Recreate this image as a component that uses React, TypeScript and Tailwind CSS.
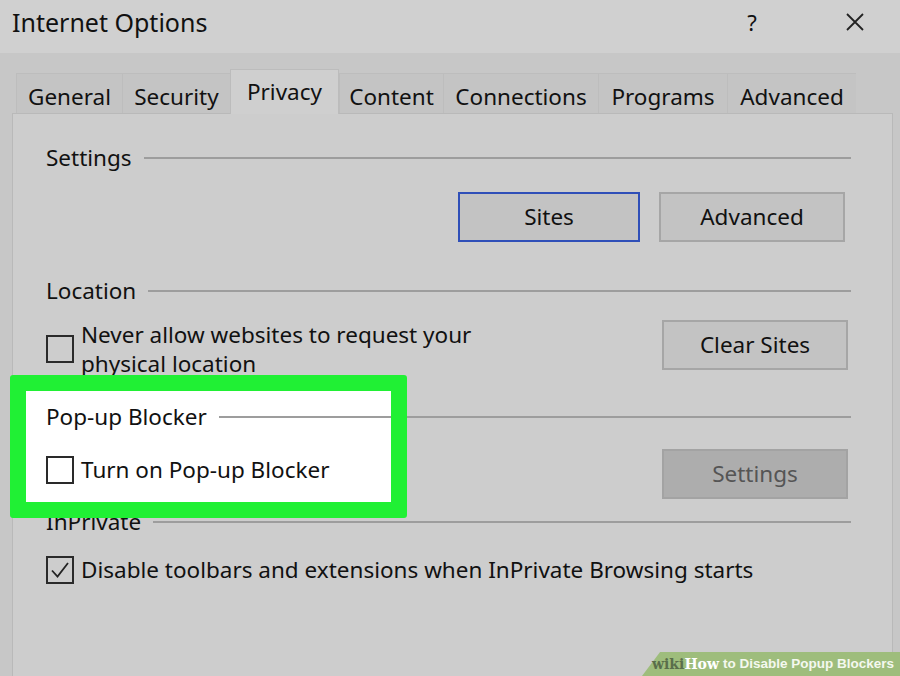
import React from 'react'

const tabs = [
    { name: 'General', w: 106 },
    { name: 'Security', w: 108 },
    { name: 'Privacy', w: 109, active: true },
    { name: 'Content', w: 104 },
    { name: 'Connections', w: 155 },
    { name: 'Programs', w: 129 },
    { name: 'Advanced', w: 129 },
]

const GroupHeader = ({ label }: { label: string }) => (
    <div className="flex items-center gap-[12px] h-[30px]">
        <span className="text-[22.5px] leading-none">{label}</span>
        <div className="flex-1 h-[2px] bg-[#9d9d9d]"></div>
    </div>
)

const CheckBox = ({ checked }: { checked?: boolean }) => (
    <div className="w-[28px] h-[28px] border-2 border-[#2a2a2a] shrink-0 flex items-center justify-center">
        {checked && (
            <svg width="22" height="22" viewBox="0 0 22 22">
                <path d="M3 11.5 L8.5 17.5 L19 4" fill="none" stroke="#222" strokeWidth="1.8" />
            </svg>
        )}
    </div>
)

const WinButton = ({
    label,
    w,
    focused,
    disabled,
}: {
    label: string
    w: number
    focused?: boolean
    disabled?: boolean
}) => (
    <div
        className={`h-[50px] flex items-center justify-center text-[22.5px] border-2 ${
            focused
                ? 'border-[#2f4fb8] bg-[#c3c3c3] text-[#111]'
                : disabled
                  ? 'border-[#a3a3a3] bg-[#adadad] text-[#555]'
                  : 'border-[#a6a6a6] bg-[#c3c3c3] text-[#111]'
        }`}
        style={{ width: w }}
    >
        {label}
    </div>
)

export default function App() {
    return (
        <div
            className="w-[900px] h-[676px] bg-[#c7c7c7] relative overflow-hidden flex flex-col text-[#111]"
            style={{ fontFamily: '"Noto Sans", "DejaVu Sans", sans-serif' }}
        >
            {/* Title bar */}
            <div className="h-[53px] bg-[#d0d0d0] flex items-start pt-[6px] pl-[12px] shrink-0">
                <div className="text-[25px] leading-[32px] flex-1">Internet Options</div>
                <div className="text-[22px] leading-[32px] w-[40px] text-center mr-[63px]">?</div>
                <div className="w-[40px] h-[32px] mr-[25px] flex items-center justify-center">
                    <svg width="20" height="20" viewBox="0 0 20 20">
                        <path d="M2 2 L18 18 M18 2 L2 18" stroke="#222" strokeWidth="1.8" />
                    </svg>
                </div>
            </div>

            {/* Tabs */}
            <div className="h-[60px] pl-[16px] flex items-end shrink-0">
                {tabs.map((t) =>
                    t.active ? (
                        <div
                            key={t.name}
                            className="h-[45px] bg-[#cfcfcf] border-t border-l border-r border-[#bcbcbc] flex items-start justify-center pt-[5px] text-[22.5px] relative z-[1] -mb-px"
                            style={{ width: t.w }}
                        >
                            {t.name}
                        </div>
                    ) : (
                        <div
                            key={t.name}
                            className="h-[40px] bg-[#c4c4c4] border-t border-l border-[#bdbdbd] flex items-center justify-center pt-[6px] text-[22.5px]"
                            style={{ width: t.w }}
                        >
                            {t.name}
                        </div>
                    )
                )}
            </div>

            {/* Panel */}
            <div className="ml-[12px] w-[881px] flex-1 bg-[#cdcdcd] border-l border-t border-r border-[#b9b9b9]">
                <div className="relative z-[2] pl-[33px] pr-[41px] pt-[29px]">
                    <GroupHeader label="Settings" />
                    <div className="flex justify-end gap-[19px] mt-[19px] pr-[6px]">
                        <WinButton label="Sites" w={182} focused />
                        <WinButton label="Advanced" w={186} />
                    </div>

                    <div className="mt-[34px]">
                        <GroupHeader label="Location" />
                    </div>
                    <div className="flex items-start mt-[14px]">
                        <div className="flex-1 flex gap-[7px] pt-[15px]">
                            <CheckBox />
                            <div className="text-[22.5px] leading-[29px] -mt-[15px]">
                                Never allow websites to request your
                                <br />
                                physical location
                            </div>
                        </div>
                        <div className="mr-[3px]">
                            <WinButton label="Clear Sites" w={186} />
                        </div>
                    </div>

                    <div className="mt-[24px]">
                        <GroupHeader label="Pop-up Blocker" />
                    </div>
                    <div className="flex items-center mt-[11px]">
                        <div className="flex-1 flex items-center gap-[7px] -mt-[2px]">
                            <CheckBox />
                            <span className="text-[22.5px]">Turn on Pop-up Blocker</span>
                        </div>
                        <div className="mr-[3px] mt-[6px]">
                            <WinButton label="Settings" w={186} disabled />
                        </div>
                    </div>

                    <div className="mt-[8px]">
                        <GroupHeader label="InPrivate" />
                    </div>
                    <div className="flex items-center gap-[7px] mt-[16px]">
                        <CheckBox checked />
                        <span className="text-[22.5px]">
                            Disable toolbars and extensions when InPrivate Browsing starts
                        </span>
                    </div>
                </div>
            </div>

            {/* Highlight */}
            <div className="absolute left-[26px] top-[391px] w-[365px] h-[111px] bg-white z-[1]"></div>
            <div className="absolute left-[10px] top-[375px] w-[397px] h-[143px] border-[16px] border-[#20f034] rounded-[3px] z-[3]"></div>

            {/* Watermark */}
            <div className="absolute right-0 bottom-0 h-[24px] w-[258px] z-[4]">
                <div className="absolute inset-0 bg-[#9ebd7c] [clip-path:polygon(7%_0,100%_0,100%_100%,0_100%)]"></div>
                <div className="relative flex items-center h-full pl-[10px] text-[14px] leading-none font-bold whitespace-nowrap">
                    <span className="text-[#5a6e4b]" style={{ fontFamily: '"DejaVu Serif", serif' }}>wiki</span>
                    <span className="text-white" style={{ fontFamily: '"DejaVu Serif", serif' }}>How</span>
                    <span className="text-[#f4f8ef] ml-[4px] text-[13.5px]" style={{ fontFamily: '"Liberation Sans", sans-serif' }}>
                        to Disable Popup Blockers
                    </span>
                </div>
            </div>
        </div>
    )
}
